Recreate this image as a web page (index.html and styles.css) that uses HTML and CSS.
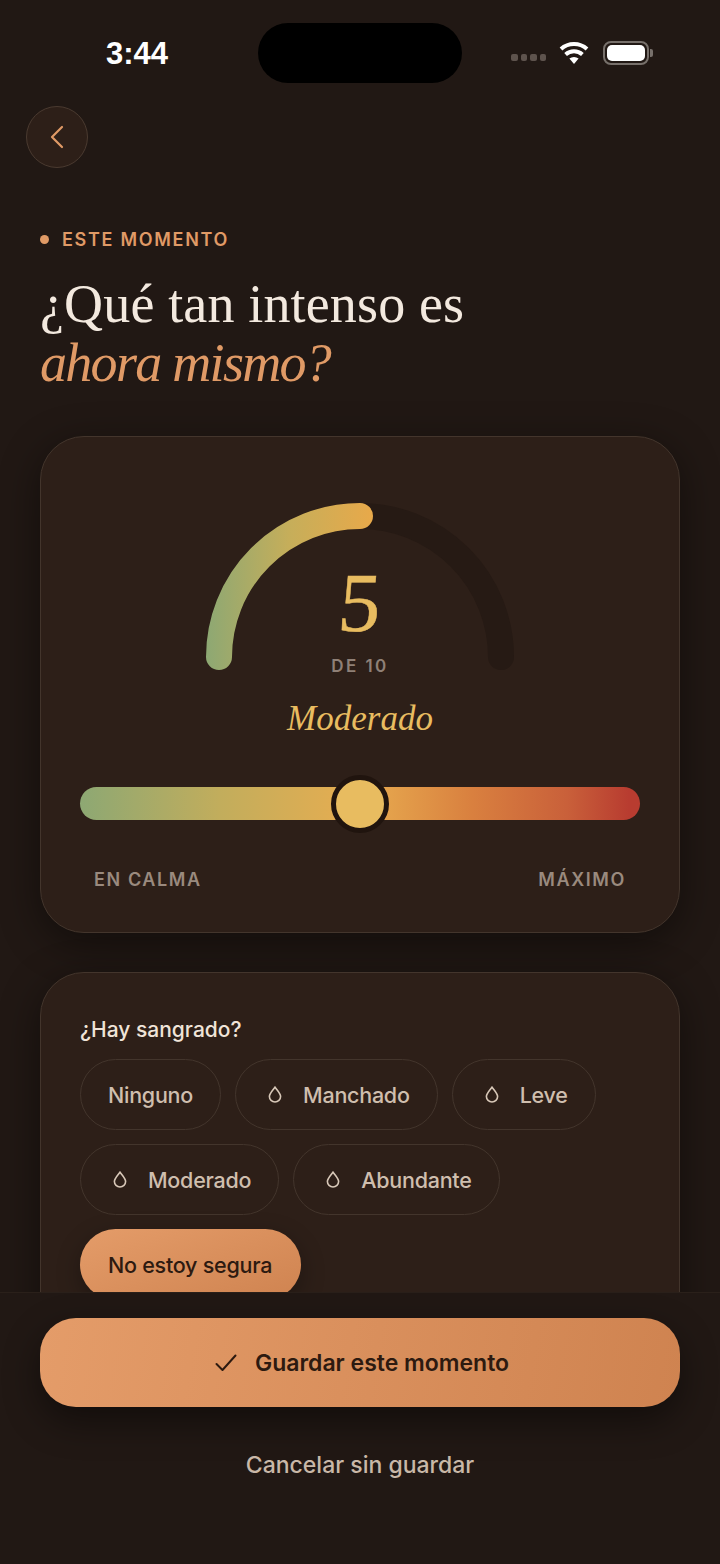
FILE: index.html
```html
<!DOCTYPE html>
<html>
	<head>
		<meta charset="UTF-8">
		<title>Este momento</title>
		<link rel="stylesheet" href="styles.css">
	</head>
	<body>
		<div class="screen">
			<div class="status">
				<span class="time">3:44</span>
				<div class="island"></div>
				<div class="sys">
					<div class="signal"><i></i><i></i><i></i><i></i></div>
					<svg class="wifi" width="32" height="24" viewBox="0 0 32 24">
						<path d="M16 23l-4.6-5.4a7 7 0 0 1 9.2 0z" fill="#fff"/>
						<path d="M7.6 13.4a12.6 12.6 0 0 1 16.8 0M3 8a19.4 19.4 0 0 1 26 0" fill="none" stroke="#fff" stroke-width="4"/>
					</svg>
					<div class="battery"><div class="battery-fill"></div></div>
				</div>
			</div>

			<button class="back">
				<svg width="16" height="26" viewBox="0 0 16 26"><path d="M13 3L3 13l10 10" fill="none" stroke="#e09a66" stroke-width="2.2" stroke-linecap="round" stroke-linejoin="round"/></svg>
			</button>

			<div class="content">
				<div class="eyebrow"><span class="dot"></span>ESTE MOMENTO</div>
				<h1 class="title">¿Qué tan intenso es<br><em>ahora mismo?</em></h1>

				<div class="card intensity">
					<div class="gauge">
						<svg width="308" height="180" viewBox="0 0 308 180">
							<defs>
								<linearGradient id="arc" gradientUnits="userSpaceOnUse" x1="0" y1="0" x2="167" y2="0">
									<stop offset="0" stop-color="#8da873"/>
									<stop offset=".5" stop-color="#c6ae5a"/>
									<stop offset="1" stop-color="#e8a94a"/>
								</linearGradient>
							</defs>
							<path d="M13 154a141 141 0 0 1 282 0" fill="none" stroke="#261a14" stroke-width="26" stroke-linecap="round"/>
							<path d="M13 154a141 141 0 0 1 141-141" fill="none" stroke="url(#arc)" stroke-width="26" stroke-linecap="round"/>
						</svg>
						<div class="gauge-text">
							<div class="num">5</div>
							<div class="of">DE 10</div>
						</div>
					</div>
					<div class="level">Moderado</div>
					<div class="slider"><div class="thumb"></div></div>
					<div class="ends"><span>EN CALMA</span><span>MÁXIMO</span></div>
				</div>

				<div class="card bleeding">
					<div class="label">¿Hay sangrado?</div>
					<div class="chips">
						<div class="chip">Ninguno</div>
						<div class="chip"><svg class="drop" width="14" height="17" viewBox="0 0 14 17"><path d="M7 1.2C5 4.2 1.4 7.4 1.4 10.6a5.6 5.4 0 0 0 11.2 0C12.6 7.4 9 4.2 7 1.2z" fill="none" stroke="#d8c8b8" stroke-width="1.6"/></svg>Manchado</div>
						<div class="chip"><svg class="drop" width="14" height="17" viewBox="0 0 14 17"><path d="M7 1.2C5 4.2 1.4 7.4 1.4 10.6a5.6 5.4 0 0 0 11.2 0C12.6 7.4 9 4.2 7 1.2z" fill="none" stroke="#d8c8b8" stroke-width="1.6"/></svg>Leve</div>
						<div class="chip"><svg class="drop" width="14" height="17" viewBox="0 0 14 17"><path d="M7 1.2C5 4.2 1.4 7.4 1.4 10.6a5.6 5.4 0 0 0 11.2 0C12.6 7.4 9 4.2 7 1.2z" fill="none" stroke="#d8c8b8" stroke-width="1.6"/></svg>Moderado</div>
						<div class="chip"><svg class="drop" width="14" height="17" viewBox="0 0 14 17"><path d="M7 1.2C5 4.2 1.4 7.4 1.4 10.6a5.6 5.4 0 0 0 11.2 0C12.6 7.4 9 4.2 7 1.2z" fill="none" stroke="#d8c8b8" stroke-width="1.6"/></svg>Abundante</div>
						<div class="chip on">No estoy segura</div>
					</div>
				</div>
			</div>

			<div class="footer">
				<button class="save">
					<svg width="22" height="18" viewBox="0 0 22 18"><path d="M1.5 10l6 6L20.5 1.5" fill="none" stroke="#2d1a10" stroke-width="2" stroke-linecap="round" stroke-linejoin="round"/></svg>
					Guardar este momento
				</button>
				<div class="cancel">Cancelar sin guardar</div>
			</div>
		</div>
	</body>
</html>
```
FILE: styles.css
```css
*{margin: 0;padding: 0;box-sizing: border-box;}
body{background: #211814;font-family: "Inter","Noto Sans",sans-serif;}
button{border: none;font: inherit;}
.screen{width: 720px;height: 1564px;position: relative;overflow: hidden;background: #211814;}

/* status bar */
.status{height: 106px;padding: 23px 0 0 106px;display: flex;align-items: flex-start;}
.time{width: 152px;height: 60px;line-height: 62px;font-family: "Liberation Sans",sans-serif;font-size: 31px;font-weight: bold;color: #fff;}
.island{width: 204px;height: 60px;border-radius: 30px;background: #000;}
.sys{margin: 18px 0 0 49px;height: 24px;display: flex;align-items: center;}
.signal{display: flex;gap: 3px;margin: 9px 12px 0 0;}
.signal i{width: 6.5px;height: 7px;border-radius: 2px;background: #5e534d;}
.wifi{margin-right: 13px;}
.battery{width: 46px;height: 24px;border: 2px solid #77706b;border-radius: 8px;padding: 2px;position: relative;}
.battery:after{content: "";position: absolute;right: -6px;top: 6px;width: 3px;height: 8px;border-radius: 0 2px 2px 0;background: #77706b;}
.battery-fill{height: 100%;border-radius: 5px;background: #fff;}

.back{width: 62px;height: 62px;margin-left: 26px;border-radius: 50%;background: #2d1f18;border: 1px solid #4a3a30;display: flex;align-items: center;justify-content: center;}

.content{padding: 0 40px;}
.eyebrow{margin-top: 58px;height: 26px;display: flex;align-items: center;gap: 13px;font-size: 18px;font-weight: 600;letter-spacing: 1.7px;color: #e09a66;}
.dot{width: 9px;height: 9px;border-radius: 50%;background: #e09a66;}
.title{margin-top: 23px;font-family: "Liberation Serif",serif;font-size: 54px;line-height: 59px;font-weight: normal;letter-spacing: .15px;color: #f3e9df;}
.title em{letter-spacing: -1.7px;color: #e09a66;}

.card{background: #2d1f18;border: 1px solid #43352c;border-radius: 44px;box-shadow: 0 10px 40px rgba(0,0,0,.45);}
.intensity{margin-top: 43px;height: 497px;padding: 66px 39px 0;}
.gauge{position: relative;width: 308px;height: 180px;margin: 0 auto;}
.gauge-text{position: absolute;left: 0;right: 0;top: 58px;text-align: center;}
.num{font-family: "Liberation Serif",serif;font-size: 84px;line-height: 84px;color: #e8bc60;-webkit-text-stroke: .5px #e8bc60;transform: skewX(-5deg);}
.of{margin-top: 11px;font-size: 17px;font-weight: 600;letter-spacing: 2.4px;color: #8f8076;}
.level{margin-top: 13px;height: 46px;line-height: 46px;text-align: center;font-family: "Liberation Serif",serif;font-style: italic;font-size: 35px;color: #e8bc60;}
.slider{margin-top: 45px;height: 33px;border-radius: 17px;background: linear-gradient(90deg,#8da873,#c2ad5c 25%,#e8ad50 50%,#d9803f 70%,#c9603a 87%,#b83c30 98%);display: flex;align-items: center;justify-content: center;}
.thumb{width: 58px;height: 58px;border-radius: 50%;background: #e8bc60;border: 5px solid #20140e;flex: none;}
.ends{margin-top: 49px;padding: 0 14px;display: flex;justify-content: space-between;font-size: 18px;font-weight: 600;letter-spacing: 1.6px;color: #9a8a7e;}

.bleeding{margin-top: 39px;padding: 43px 39px 60px;}
.label{font-size: 21px;font-weight: 500;line-height: 28px;color: #f0e4d8;}
.chips{margin-top: 15px;display: flex;flex-wrap: wrap;gap: 14px;}
.chip{height: 71px;padding: 0 27px;border: 1px solid #43352c;border-radius: 36px;display: flex;align-items: center;gap: 16px;font-size: 21.5px;font-weight: 500;letter-spacing: -.25px;color: #cfbeae;}
.drop{margin: 0 5px;}
.chip.on{padding: 0 29px 0 28px;border: none;background: linear-gradient(160deg,#e49c69,#cf8350);color: #2d1a10;box-shadow: 0 8px 24px rgba(0,0,0,.3);}

.footer{position: absolute;left: 0;right: 0;bottom: 0;height: 272px;padding: 25px 40px 0;background: #211814;border-top: 1px solid #2a201a;}
.save{width: 100%;height: 89px;padding-left: 4px;border-radius: 36px;background: linear-gradient(100deg,#e49c69,#cf8350);box-shadow: 0 14px 36px rgba(0,0,0,.45);display: flex;align-items: center;justify-content: center;gap: 18px;font-size: 23px;font-weight: 600;color: #2d1a10;}
.cancel{margin-top: 44px;text-align: center;font-size: 23px;font-weight: 500;color: #c9b8a8;}
```
